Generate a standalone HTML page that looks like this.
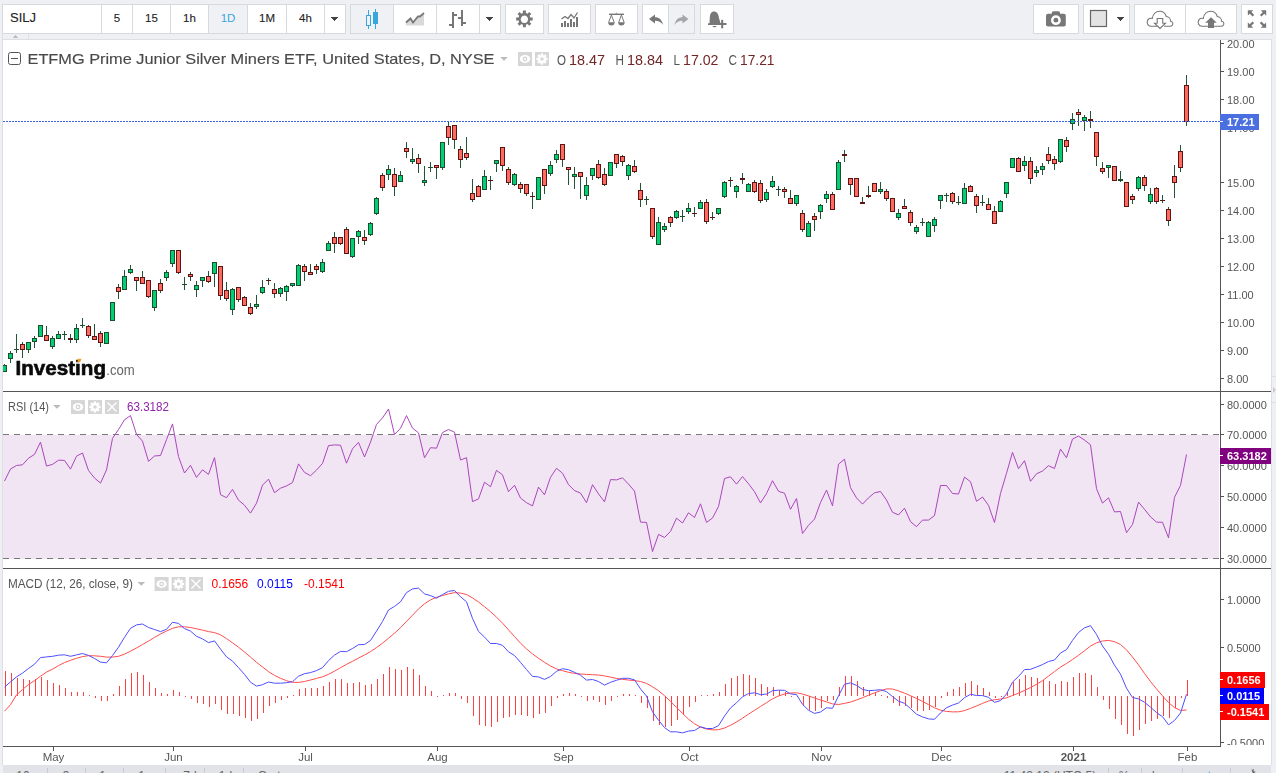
<!DOCTYPE html>
<html><head><meta charset="utf-8">
<style>
html,body{margin:0;padding:0}
body{width:1276px;height:773px;overflow:hidden;position:relative;background:#eef0f4;font-family:"Liberation Sans",sans-serif;color:#333}
.b{position:absolute;top:4px;height:28px;background:#fff;border:1px solid #d6d9de;box-sizing:content-box}
.d{position:absolute;top:5px;width:1px;height:28px;background:#d6d9de}
.t{position:absolute;top:4px;height:28px;line-height:28px;text-align:center;font-size:11.5px;color:#222;font-weight:normal;-webkit-text-stroke:0.1px #222}
.g{position:absolute;background:#f0f1f4}
#chart{position:absolute;left:2px;top:39px;width:1268px;height:725px;background:#fff;border:1px solid #dcdfe4;border-bottom:none}
svg{position:absolute;left:0;top:0}
</style></head><body>
<!-- toolbar group 1 -->
<div class="b" style="left:2px;width:342px"></div>
<div class="g" style="left:209px;top:5px;width:38px;height:28px"></div>
<div class="d" style="left:101px"></div>
<div class="d" style="left:132px"></div>
<div class="d" style="left:170px"></div>
<div class="d" style="left:208px"></div>
<div class="d" style="left:247px"></div>
<div class="d" style="left:286px"></div>
<div class="d" style="left:324px"></div>
<div class="t" style="left:10px;width:60px;text-align:left;font-weight:normal;font-size:13px">SILJ</div>
<div class="t" style="left:102px;width:30px">5</div>
<div class="t" style="left:133px;width:37px">15</div>
<div class="t" style="left:171px;width:37px">1h</div>
<div class="t" style="left:209px;width:38px;color:#37a6de;-webkit-text-stroke:0">1D</div>
<div class="t" style="left:248px;width:38px">1M</div>
<div class="t" style="left:287px;width:37px">4h</div>
<!-- group 2 -->
<div class="b" style="left:350px;width:149px"></div>
<div class="g" style="left:351px;top:5px;width:42px;height:28px"></div>
<div class="d" style="left:393px"></div>
<div class="d" style="left:436px"></div>
<div class="d" style="left:479px"></div>
<!-- group 3..7 -->
<div class="b" style="left:505px;width:37px"></div>
<div class="b" style="left:548px;width:41px"></div>
<div class="b" style="left:595px;width:41px"></div>
<div class="b" style="left:642px;width:51px"></div>
<div class="g" style="left:669px;top:5px;width:25px;height:28px"></div>
<div class="d" style="left:668px"></div>
<div class="b" style="left:700px;width:32px"></div>
<!-- right groups -->
<div class="b" style="left:1033px;width:44px"></div>
<div class="b" style="left:1083px;width:45px"></div>
<div class="b" style="left:1134px;width:101px"></div>
<div class="d" style="left:1185px"></div>
<div class="b" style="left:1241px;width:30px"></div>

<!-- chart frame -->
<div id="chart"></div>
<div style="position:absolute;left:28px;top:34px;width:1px;height:5px;background:#dcdfe4"></div>
<div style="position:absolute;left:2px;top:33px;width:1px;height:6px;background:#dcdfe4"></div>

<!-- bottom toolbar -->
<div style="position:absolute;left:3px;top:765px;width:1268px;height:8px;background:#e1e3e8;overflow:hidden">
 <svg width="1268" height="8" viewBox="3 765 1268 8" style="position:absolute;left:0;top:0">
  <g fill="#c9ccd2">
   <rect x="47" y="768" width="1" height="6"/><rect x="85" y="768" width="1" height="6"/><rect x="123" y="768" width="1" height="6"/>
   <rect x="165" y="768" width="1" height="6"/><rect x="204" y="768" width="1" height="6"/><rect x="243" y="768" width="1" height="6"/>
   <rect x="1108" y="768" width="1" height="6"/><rect x="1141" y="768" width="1" height="6"/><rect x="1182" y="768" width="1" height="6"/><rect x="1230" y="768" width="1" height="6"/>
  </g>
  <g font-family="Liberation Sans" font-size="12" fill="#666" text-anchor="middle">
   <text x="26" y="779.6">10y</text><text x="69" y="779.6">3y</text><text x="105.5" y="779.6">1y</text><text x="146.5" y="779.6">1m</text>
   <text x="190" y="779.6">7d</text><text x="225.5" y="779.6">1d</text><text x="277.5" y="779.6">Go to...</text>
   <text x="1050" y="779.6">11:42:12 (UTC-5)</text><text x="1124" y="779.6">%</text><text x="1160" y="779.6">log</text>
   <text x="1206" y="779.6" fill="#37a6de">auto</text>
  </g>
  <path d="M1251 768 l1 2 2 -1 -0.5 2.2 2.2 0.5 -1.5 1.5 1.5 1.5 -2.2 0.5z" fill="#666"/>
 </svg>
</div>
<!-- right strip -->
<div style="position:absolute;left:1272px;top:39px;width:4px;height:734px;background:#eef0f4"></div>
<div style="position:absolute;left:1272px;top:376px;width:4px;height:1px;background:#dcdfe4"></div>
<div style="position:absolute;left:1272px;top:402px;width:4px;height:1px;background:#dcdfe4"></div>
<svg width="4" height="8" style="position:absolute;left:1272px;top:386px"><path d="M1 1 L4 4 L1 7z" fill="#c9c9c9"/></svg>
<svg width="1276" height="773" viewBox="0 0 1276 773" shape-rendering="crispEdges" style="will-change:transform">
<defs><clipPath id="mainclip"><rect x="3" y="40" width="1217" height="351"/></clipPath><clipPath id="macdclip"><rect x="1221" y="569" width="50" height="176"/></clipPath></defs>
<!-- toolbar icons -->
<g fill="#444">
 <path d="M330 17 h8 l-4 4z"/>
 <path d="M485 17 h8 l-4 4z"/>
 <path d="M1116 17 h8 l-4 4z"/>
</g>
<!-- candle type icon (blue) -->
<g fill="#37a6de">
 <rect x="368" y="10" width="1" height="19"/>
 <rect x="366" y="15" width="5" height="11"/>
 <rect x="367" y="16" width="3" height="9" fill="#f0f1f4"/>
 <rect x="375" y="9" width="1" height="20"/>
 <rect x="373" y="12" width="5" height="12"/>
</g>
<!-- line chart icon -->
<path d="M406 25.5 L406 22.5 L410.5 18.5 L413 22.5 L418 16.5 L420 16.5 L424 13 L424 25.5 Z" fill="#d9d9d9" shape-rendering="auto"/>
<polyline points="406,22.5 410.5,18.5 413,22.5 418,16.5 420,16.5 424,13" fill="none" stroke="#777" stroke-width="1.8" shape-rendering="auto"/>
<!-- bars icon -->
<g fill="#777">
 <rect x="452" y="12" width="2" height="16"/>
 <rect x="449" y="24" width="3" height="2"/>
 <rect x="454" y="14" width="3" height="2"/>
 <rect x="461" y="10" width="2" height="16"/>
 <rect x="458" y="17" width="3" height="2"/>
 <rect x="463" y="22" width="3" height="2"/>
</g>
<!-- gear -->
<g fill="#777" shape-rendering="auto">
 <path d="M522.9 10.6h3v2.4l1.6 0.7 1.7-1.7 2.1 2.1-1.7 1.7 0.7 1.6h2.4v3h-2.4l-0.7 1.6 1.7 1.7-2.1 2.1-1.7-1.7-1.6 0.7v2.4h-3v-2.4l-1.6-0.7-1.7 1.7-2.1-2.1 1.7-1.7-0.7-1.6h-2.4v-3h2.4l0.7-1.6-1.7-1.7 2.1-2.1 1.7 1.7 1.6-0.7z M524.4 15.6a3.7 3.7 0 1 0 0.01 0z" fill-rule="evenodd"/>
</g>
<!-- indicators -->
<g fill="#777">
 <rect x="561" y="23" width="2" height="4"/>
 <rect x="564" y="21" width="2" height="6"/>
 <rect x="567" y="23" width="2" height="4"/>
 <rect x="570" y="19" width="2" height="8"/>
 <rect x="573" y="22" width="2" height="5"/>
 <rect x="576" y="17" width="2" height="10"/>
</g>
<polyline points="561.5,19 565,16.5 568,18.5 571,14.5 574,18 577.5,12.5" fill="none" stroke="#777" stroke-width="1.3" shape-rendering="auto"/>
<!-- scales -->
<g fill="none" stroke="#777" stroke-width="1" shape-rendering="auto">
 <rect x="609" y="13.6" width="15" height="1.4" fill="#777" stroke="none"/>
 <path d="M615.5 13.6 L616.5 12.4 L617.5 13.6z" fill="#777" stroke="none"/>
 <path d="M611.4 15 L608.6 22.5 M611.4 15 L614.2 22.5 M621.4 15 L618.6 22.5 M621.4 15 L624.2 22.5"/>
 <path d="M608.2 22.3 a3.2 3.2 0 0 0 6.4 0z M618.2 22.3 a3.2 3.2 0 0 0 6.4 0z" fill="#777" stroke="none"/>
</g>
<!-- undo / redo -->
<g shape-rendering="auto">
 <path d="M649 19 L655 14.5 L655 17.2 C659 17.2 662 19.5 663 25 C661 22 658.5 20.8 655 20.8 L655 23.5 Z" fill="#777"/>
 <path d="M688.5 19 L682.5 14.5 L682.5 17.2 C678.5 17.2 675.5 19.5 674.5 25 C676.5 22 679 20.8 682.5 20.8 L682.5 23.5 Z" fill="#a6a6a6"/>
</g>
<!-- alert -->
<g fill="#777" shape-rendering="auto">
 <path d="M714 11.5 C711 11.5 710 14 709.8 18 L709.5 23.2 L708 23.2 L708 25 L718.5 25 L718.5 23.2 L720.5 23.2 L719 18 C718.5 14 717 11.5 714 11.5z"/>
 <path d="M712.5 26 h4 a2 1.2 0 0 1 -4 0z"/>
 <rect x="718" y="23" width="8.5" height="2"/>
 <rect x="721.2" y="19.8" width="2" height="8.5"/>
</g>
<!-- camera -->
<g fill="#777" shape-rendering="auto">
 <rect x="1046" y="13.8" width="19.8" height="12.8" rx="2"/>
 <rect x="1051.8" y="11.2" width="8.2" height="4" rx="1.5"/>
 <circle cx="1055.9" cy="20.2" r="4.9" fill="#fff"/>
 <circle cx="1055.9" cy="20.2" r="2.4" fill="#777"/>
</g>
<!-- color box -->
<rect x="1090.5" y="10.5" width="16" height="16" fill="#e3e3e3" stroke="#666" stroke-width="1.2" shape-rendering="auto"/>
<!-- clouds -->
<g fill="none" stroke="#777" stroke-width="1.1" shape-rendering="auto">
 <path d="M1157 26.3 H1151 C1147.5 26.3 1146.8 22.5 1147.4 21 C1148 18.8 1150 18 1152.3 18.4 C1153 14 1156 11.2 1159.5 11.2 C1163 11.2 1165.5 13.5 1166.3 16.5 C1168.8 16.8 1170.7 18.8 1170.5 21.2 C1172.8 21.5 1173.2 23.5 1172.5 25 C1172 26 1171 26.3 1170 26.3 H1164"/>
 <path d="M1157.2 18.5 H1162.7 V23.2 H1165.5 L1160 28.5 L1154.5 23.2 H1157.2 Z" fill="#fff"/>
 <path d="M1208 26.3 H1202 C1198.5 26.3 1197.8 22.5 1198.4 21 C1199 18.8 1201 18 1203.3 18.4 C1204 14 1207 11.2 1210.5 11.2 C1214 11.2 1216.5 13.5 1217.3 16.5 C1219.8 16.8 1221.7 18.8 1221.5 21.2 C1223.8 21.5 1224.2 23.5 1223.5 25 C1223 26 1222 26.3 1221 26.3 H1214"/>
 <path d="M1211 17.2 L1216.8 22.8 H1214 V28 H1208 V22.8 H1205.2 Z" fill="#777" stroke="none"/>
</g>
<!-- fullscreen -->
<g fill="#777" shape-rendering="auto">
 <path d="M1247.8 10.2 h5.5 l-1.9 1.9 2.8 2.8-1.6 1.6-2.8-2.8-1.9 1.9z"/>
 <path d="M1266.2 10.2 v5.5 l-1.9-1.9-2.8 2.8-1.6-1.6 2.8-2.8-1.9-1.9z"/>
 <path d="M1247.8 27.8 v-5.5 l1.9 1.9 2.8-2.8 1.6 1.6-2.8 2.8 1.9 1.9z"/>
 <path d="M1266.2 27.8 h-5.5 l1.9-1.9-2.8-2.8 1.6-1.6 2.8 2.8 1.9-1.9z"/>
</g>
<!-- sub strip triangle -->
<path d="M12.8 38 L15.5 34.8 L18.2 38z" fill="#bbb" shape-rendering="auto"/>

<!-- RSI band -->
<rect x="3" y="434.5" width="1216" height="124.1" fill="#f1e5f3"/>
<line x1="3" y1="434.5" x2="1220" y2="434.5" stroke="#777" stroke-dasharray="6,5" shape-rendering="crispEdges"/>
<line x1="3" y1="558.5" x2="1220" y2="558.5" stroke="#777" stroke-dasharray="6,5" shape-rendering="crispEdges"/>

<!-- axes -->
<rect x="1220" y="40" width="1" height="707" fill="#555"/>
<rect x="3" y="391" width="1268" height="1" fill="#555"/>
<rect x="3" y="568" width="1268" height="1" fill="#555"/>
<rect x="3" y="746" width="1218" height="1" fill="#555"/>

<!-- candles -->
<g clip-path="url(#mainclip)">
<rect x="4" y="364" width="1" height="8" fill="#225535"/>
<rect x="2" y="365" width="5" height="7" fill="#1d4d2c"/>
<rect x="3" y="366" width="3" height="5" fill="#00d073"/>
<rect x="10" y="351" width="1" height="12" fill="#225535"/>
<rect x="8" y="353" width="5" height="6" fill="#1d4d2c"/>
<rect x="9" y="354" width="3" height="4" fill="#00d073"/>
<rect x="16" y="334" width="1" height="19" fill="#225535"/>
<rect x="14" y="349" width="5" height="1" fill="#1d4d2c"/>
<rect x="22" y="342" width="1" height="16" fill="#225535"/>
<rect x="20" y="344" width="5" height="6" fill="#5c1414"/>
<rect x="21" y="345" width="3" height="4" fill="#ff6a5f"/>
<rect x="28" y="342" width="1" height="11" fill="#225535"/>
<rect x="26" y="342" width="5" height="8" fill="#1d4d2c"/>
<rect x="27" y="343" width="3" height="6" fill="#00d073"/>
<rect x="34" y="336" width="1" height="12" fill="#225535"/>
<rect x="32" y="338" width="5" height="4" fill="#1d4d2c"/>
<rect x="33" y="339" width="3" height="2" fill="#00d073"/>
<rect x="40" y="325" width="1" height="12" fill="#225535"/>
<rect x="38" y="325" width="5" height="12" fill="#1d4d2c"/>
<rect x="39" y="326" width="3" height="10" fill="#00d073"/>
<rect x="46" y="326" width="1" height="15" fill="#225535"/>
<rect x="44" y="335" width="5" height="6" fill="#5c1414"/>
<rect x="45" y="336" width="3" height="4" fill="#ff6a5f"/>
<rect x="52" y="336" width="1" height="13" fill="#225535"/>
<rect x="50" y="338" width="5" height="9" fill="#1d4d2c"/>
<rect x="51" y="339" width="3" height="7" fill="#00d073"/>
<rect x="58" y="331" width="1" height="8" fill="#225535"/>
<rect x="56" y="334" width="5" height="5" fill="#1d4d2c"/>
<rect x="57" y="335" width="3" height="3" fill="#00d073"/>
<rect x="64" y="331" width="1" height="9" fill="#225535"/>
<rect x="62" y="334" width="5" height="1" fill="#1d4d2c"/>
<rect x="70" y="334" width="1" height="9" fill="#225535"/>
<rect x="68" y="338" width="5" height="2" fill="#5c1414"/>
<rect x="76" y="324" width="1" height="19" fill="#225535"/>
<rect x="74" y="328" width="5" height="12" fill="#1d4d2c"/>
<rect x="75" y="329" width="3" height="10" fill="#00d073"/>
<rect x="82" y="318" width="1" height="10" fill="#225535"/>
<rect x="80" y="325" width="5" height="1" fill="#1d4d2c"/>
<rect x="88" y="325" width="1" height="13" fill="#225535"/>
<rect x="86" y="326" width="5" height="10" fill="#5c1414"/>
<rect x="87" y="327" width="3" height="8" fill="#ff6a5f"/>
<rect x="94" y="324" width="1" height="16" fill="#225535"/>
<rect x="92" y="336" width="5" height="4" fill="#5c1414"/>
<rect x="93" y="337" width="3" height="2" fill="#ff6a5f"/>
<rect x="100" y="331" width="1" height="16" fill="#225535"/>
<rect x="98" y="333" width="5" height="10" fill="#5c1414"/>
<rect x="99" y="334" width="3" height="8" fill="#ff6a5f"/>
<rect x="106" y="332" width="1" height="12" fill="#225535"/>
<rect x="104" y="332" width="5" height="12" fill="#1d4d2c"/>
<rect x="105" y="333" width="3" height="10" fill="#00d073"/>
<rect x="112" y="302" width="1" height="19" fill="#225535"/>
<rect x="110" y="302" width="5" height="19" fill="#1d4d2c"/>
<rect x="111" y="303" width="3" height="17" fill="#00d073"/>
<rect x="118" y="284" width="1" height="15" fill="#225535"/>
<rect x="116" y="287" width="5" height="5" fill="#5c1414"/>
<rect x="117" y="288" width="3" height="3" fill="#ff6a5f"/>
<rect x="124" y="270" width="1" height="20" fill="#225535"/>
<rect x="122" y="276" width="5" height="14" fill="#1d4d2c"/>
<rect x="123" y="277" width="3" height="12" fill="#00d073"/>
<rect x="130" y="265" width="1" height="9" fill="#225535"/>
<rect x="128" y="269" width="5" height="4" fill="#1d4d2c"/>
<rect x="129" y="270" width="3" height="2" fill="#00d073"/>
<rect x="136" y="277" width="1" height="14" fill="#225535"/>
<rect x="134" y="277" width="5" height="4" fill="#5c1414"/>
<rect x="135" y="278" width="3" height="2" fill="#ff6a5f"/>
<rect x="142" y="271" width="1" height="13" fill="#225535"/>
<rect x="140" y="277" width="5" height="7" fill="#5c1414"/>
<rect x="141" y="278" width="3" height="5" fill="#ff6a5f"/>
<rect x="148" y="280" width="1" height="18" fill="#225535"/>
<rect x="146" y="280" width="5" height="17" fill="#5c1414"/>
<rect x="147" y="281" width="3" height="15" fill="#ff6a5f"/>
<rect x="154" y="290" width="1" height="21" fill="#225535"/>
<rect x="152" y="290" width="5" height="18" fill="#1d4d2c"/>
<rect x="153" y="291" width="3" height="16" fill="#00d073"/>
<rect x="160" y="279" width="1" height="14" fill="#225535"/>
<rect x="158" y="283" width="5" height="8" fill="#5c1414"/>
<rect x="159" y="284" width="3" height="6" fill="#ff6a5f"/>
<rect x="166" y="270" width="1" height="11" fill="#225535"/>
<rect x="164" y="272" width="5" height="6" fill="#1d4d2c"/>
<rect x="165" y="273" width="3" height="4" fill="#00d073"/>
<rect x="172" y="250" width="1" height="17" fill="#225535"/>
<rect x="170" y="250" width="5" height="14" fill="#1d4d2c"/>
<rect x="171" y="251" width="3" height="12" fill="#00d073"/>
<rect x="178" y="250" width="1" height="24" fill="#225535"/>
<rect x="176" y="250" width="5" height="23" fill="#5c1414"/>
<rect x="177" y="251" width="3" height="21" fill="#ff6a5f"/>
<rect x="184" y="277" width="1" height="13" fill="#225535"/>
<rect x="182" y="284" width="5" height="1" fill="#1d4d2c"/>
<rect x="190" y="272" width="1" height="9" fill="#225535"/>
<rect x="188" y="274" width="5" height="3" fill="#5c1414"/>
<rect x="189" y="275" width="3" height="1" fill="#ff6a5f"/>
<rect x="196" y="281" width="1" height="16" fill="#225535"/>
<rect x="194" y="285" width="5" height="5" fill="#1d4d2c"/>
<rect x="195" y="286" width="3" height="3" fill="#00d073"/>
<rect x="202" y="277" width="1" height="10" fill="#225535"/>
<rect x="200" y="277" width="5" height="4" fill="#1d4d2c"/>
<rect x="201" y="278" width="3" height="2" fill="#00d073"/>
<rect x="208" y="271" width="1" height="12" fill="#225535"/>
<rect x="206" y="276" width="5" height="6" fill="#5c1414"/>
<rect x="207" y="277" width="3" height="4" fill="#ff6a5f"/>
<rect x="214" y="262" width="1" height="25" fill="#225535"/>
<rect x="212" y="262" width="5" height="12" fill="#1d4d2c"/>
<rect x="213" y="263" width="3" height="10" fill="#00d073"/>
<rect x="220" y="266" width="1" height="34" fill="#225535"/>
<rect x="218" y="266" width="5" height="30" fill="#5c1414"/>
<rect x="219" y="267" width="3" height="28" fill="#ff6a5f"/>
<rect x="226" y="282" width="1" height="19" fill="#225535"/>
<rect x="224" y="290" width="5" height="9" fill="#5c1414"/>
<rect x="225" y="291" width="3" height="7" fill="#ff6a5f"/>
<rect x="232" y="288" width="1" height="27" fill="#225535"/>
<rect x="230" y="289" width="5" height="21" fill="#1d4d2c"/>
<rect x="231" y="290" width="3" height="19" fill="#00d073"/>
<rect x="238" y="287" width="1" height="15" fill="#225535"/>
<rect x="236" y="287" width="5" height="13" fill="#5c1414"/>
<rect x="237" y="288" width="3" height="11" fill="#ff6a5f"/>
<rect x="244" y="296" width="1" height="10" fill="#225535"/>
<rect x="242" y="297" width="5" height="9" fill="#5c1414"/>
<rect x="243" y="298" width="3" height="7" fill="#ff6a5f"/>
<rect x="250" y="303" width="1" height="12" fill="#225535"/>
<rect x="248" y="307" width="5" height="7" fill="#5c1414"/>
<rect x="249" y="308" width="3" height="5" fill="#ff6a5f"/>
<rect x="256" y="295" width="1" height="14" fill="#225535"/>
<rect x="254" y="304" width="5" height="3" fill="#1d4d2c"/>
<rect x="255" y="305" width="3" height="1" fill="#00d073"/>
<rect x="262" y="280" width="1" height="14" fill="#225535"/>
<rect x="260" y="287" width="5" height="6" fill="#1d4d2c"/>
<rect x="261" y="288" width="3" height="4" fill="#00d073"/>
<rect x="268" y="278" width="1" height="7" fill="#225535"/>
<rect x="266" y="280" width="5" height="1" fill="#5c1414"/>
<rect x="274" y="283" width="1" height="15" fill="#225535"/>
<rect x="272" y="289" width="5" height="5" fill="#5c1414"/>
<rect x="273" y="290" width="3" height="3" fill="#ff6a5f"/>
<rect x="280" y="287" width="1" height="10" fill="#225535"/>
<rect x="278" y="288" width="5" height="6" fill="#1d4d2c"/>
<rect x="279" y="289" width="3" height="4" fill="#00d073"/>
<rect x="286" y="285" width="1" height="16" fill="#225535"/>
<rect x="284" y="286" width="5" height="6" fill="#1d4d2c"/>
<rect x="285" y="287" width="3" height="4" fill="#00d073"/>
<rect x="292" y="283" width="1" height="4" fill="#225535"/>
<rect x="290" y="283" width="5" height="3" fill="#1d4d2c"/>
<rect x="291" y="284" width="3" height="1" fill="#00d073"/>
<rect x="298" y="264" width="1" height="22" fill="#225535"/>
<rect x="296" y="265" width="5" height="21" fill="#1d4d2c"/>
<rect x="297" y="266" width="3" height="19" fill="#00d073"/>
<rect x="304" y="264" width="1" height="17" fill="#225535"/>
<rect x="302" y="266" width="5" height="6" fill="#5c1414"/>
<rect x="303" y="267" width="3" height="4" fill="#ff6a5f"/>
<rect x="310" y="264" width="1" height="11" fill="#225535"/>
<rect x="308" y="272" width="5" height="3" fill="#5c1414"/>
<rect x="309" y="273" width="3" height="1" fill="#ff6a5f"/>
<rect x="316" y="264" width="1" height="10" fill="#225535"/>
<rect x="314" y="266" width="5" height="4" fill="#5c1414"/>
<rect x="315" y="267" width="3" height="2" fill="#ff6a5f"/>
<rect x="322" y="259" width="1" height="14" fill="#225535"/>
<rect x="320" y="262" width="5" height="10" fill="#1d4d2c"/>
<rect x="321" y="263" width="3" height="8" fill="#00d073"/>
<rect x="328" y="241" width="1" height="10" fill="#225535"/>
<rect x="326" y="243" width="5" height="8" fill="#1d4d2c"/>
<rect x="327" y="244" width="3" height="6" fill="#00d073"/>
<rect x="334" y="232" width="1" height="21" fill="#225535"/>
<rect x="332" y="237" width="5" height="7" fill="#5c1414"/>
<rect x="333" y="238" width="3" height="5" fill="#ff6a5f"/>
<rect x="340" y="237" width="1" height="8" fill="#225535"/>
<rect x="338" y="237" width="5" height="7" fill="#5c1414"/>
<rect x="339" y="238" width="3" height="5" fill="#ff6a5f"/>
<rect x="346" y="227" width="1" height="27" fill="#225535"/>
<rect x="344" y="229" width="5" height="25" fill="#5c1414"/>
<rect x="345" y="230" width="3" height="23" fill="#ff6a5f"/>
<rect x="352" y="238" width="1" height="20" fill="#225535"/>
<rect x="350" y="238" width="5" height="19" fill="#1d4d2c"/>
<rect x="351" y="239" width="3" height="17" fill="#00d073"/>
<rect x="358" y="230" width="1" height="14" fill="#225535"/>
<rect x="356" y="231" width="5" height="6" fill="#1d4d2c"/>
<rect x="357" y="232" width="3" height="4" fill="#00d073"/>
<rect x="364" y="230" width="1" height="15" fill="#225535"/>
<rect x="362" y="237" width="5" height="4" fill="#5c1414"/>
<rect x="363" y="238" width="3" height="2" fill="#ff6a5f"/>
<rect x="370" y="222" width="1" height="14" fill="#225535"/>
<rect x="368" y="223" width="5" height="12" fill="#1d4d2c"/>
<rect x="369" y="224" width="3" height="10" fill="#00d073"/>
<rect x="376" y="197" width="1" height="18" fill="#225535"/>
<rect x="374" y="198" width="5" height="16" fill="#1d4d2c"/>
<rect x="375" y="199" width="3" height="14" fill="#00d073"/>
<rect x="382" y="173" width="1" height="18" fill="#225535"/>
<rect x="380" y="175" width="5" height="13" fill="#5c1414"/>
<rect x="381" y="176" width="3" height="11" fill="#ff6a5f"/>
<rect x="388" y="165" width="1" height="15" fill="#225535"/>
<rect x="386" y="169" width="5" height="6" fill="#1d4d2c"/>
<rect x="387" y="170" width="3" height="4" fill="#00d073"/>
<rect x="394" y="168" width="1" height="28" fill="#225535"/>
<rect x="392" y="174" width="5" height="13" fill="#5c1414"/>
<rect x="393" y="175" width="3" height="11" fill="#ff6a5f"/>
<rect x="400" y="171" width="1" height="11" fill="#225535"/>
<rect x="398" y="175" width="5" height="7" fill="#1d4d2c"/>
<rect x="399" y="176" width="3" height="5" fill="#00d073"/>
<rect x="406" y="142" width="1" height="16" fill="#225535"/>
<rect x="404" y="148" width="5" height="4" fill="#5c1414"/>
<rect x="405" y="149" width="3" height="2" fill="#ff6a5f"/>
<rect x="412" y="148" width="1" height="16" fill="#225535"/>
<rect x="410" y="159" width="5" height="3" fill="#1d4d2c"/>
<rect x="411" y="160" width="3" height="1" fill="#00d073"/>
<rect x="418" y="154" width="1" height="19" fill="#225535"/>
<rect x="416" y="158" width="5" height="6" fill="#5c1414"/>
<rect x="417" y="159" width="3" height="4" fill="#ff6a5f"/>
<rect x="424" y="166" width="1" height="20" fill="#225535"/>
<rect x="422" y="180" width="5" height="3" fill="#1d4d2c"/>
<rect x="423" y="181" width="3" height="1" fill="#00d073"/>
<rect x="430" y="162" width="1" height="10" fill="#225535"/>
<rect x="428" y="167" width="5" height="1" fill="#1d4d2c"/>
<rect x="436" y="165" width="1" height="14" fill="#225535"/>
<rect x="434" y="165" width="5" height="3" fill="#5c1414"/>
<rect x="435" y="166" width="3" height="1" fill="#ff6a5f"/>
<rect x="442" y="142" width="1" height="28" fill="#225535"/>
<rect x="440" y="142" width="5" height="26" fill="#1d4d2c"/>
<rect x="441" y="143" width="3" height="24" fill="#00d073"/>
<rect x="448" y="122" width="1" height="23" fill="#225535"/>
<rect x="446" y="126" width="5" height="12" fill="#5c1414"/>
<rect x="447" y="127" width="3" height="10" fill="#ff6a5f"/>
<rect x="454" y="125" width="1" height="24" fill="#225535"/>
<rect x="452" y="125" width="5" height="15" fill="#5c1414"/>
<rect x="453" y="126" width="3" height="13" fill="#ff6a5f"/>
<rect x="460" y="146" width="1" height="22" fill="#225535"/>
<rect x="458" y="149" width="5" height="11" fill="#5c1414"/>
<rect x="459" y="150" width="3" height="9" fill="#ff6a5f"/>
<rect x="466" y="137" width="1" height="23" fill="#225535"/>
<rect x="464" y="153" width="5" height="5" fill="#5c1414"/>
<rect x="465" y="154" width="3" height="3" fill="#ff6a5f"/>
<rect x="472" y="179" width="1" height="23" fill="#225535"/>
<rect x="470" y="193" width="5" height="7" fill="#5c1414"/>
<rect x="471" y="194" width="3" height="5" fill="#ff6a5f"/>
<rect x="478" y="185" width="1" height="12" fill="#225535"/>
<rect x="476" y="186" width="5" height="11" fill="#5c1414"/>
<rect x="477" y="187" width="3" height="9" fill="#ff6a5f"/>
<rect x="484" y="170" width="1" height="20" fill="#225535"/>
<rect x="482" y="176" width="5" height="14" fill="#1d4d2c"/>
<rect x="483" y="177" width="3" height="12" fill="#00d073"/>
<rect x="490" y="176" width="1" height="14" fill="#225535"/>
<rect x="488" y="180" width="5" height="1" fill="#5c1414"/>
<rect x="496" y="160" width="1" height="12" fill="#225535"/>
<rect x="494" y="160" width="5" height="4" fill="#1d4d2c"/>
<rect x="495" y="161" width="3" height="2" fill="#00d073"/>
<rect x="502" y="147" width="1" height="24" fill="#225535"/>
<rect x="500" y="147" width="5" height="19" fill="#5c1414"/>
<rect x="501" y="148" width="3" height="17" fill="#ff6a5f"/>
<rect x="508" y="167" width="1" height="18" fill="#225535"/>
<rect x="506" y="169" width="5" height="14" fill="#5c1414"/>
<rect x="507" y="170" width="3" height="12" fill="#ff6a5f"/>
<rect x="514" y="173" width="1" height="13" fill="#225535"/>
<rect x="512" y="174" width="5" height="11" fill="#1d4d2c"/>
<rect x="513" y="175" width="3" height="9" fill="#00d073"/>
<rect x="520" y="182" width="1" height="11" fill="#225535"/>
<rect x="518" y="184" width="5" height="5" fill="#5c1414"/>
<rect x="519" y="185" width="3" height="3" fill="#ff6a5f"/>
<rect x="526" y="184" width="1" height="12" fill="#225535"/>
<rect x="524" y="184" width="5" height="10" fill="#5c1414"/>
<rect x="525" y="185" width="3" height="8" fill="#ff6a5f"/>
<rect x="532" y="192" width="1" height="17" fill="#225535"/>
<rect x="530" y="196" width="5" height="1" fill="#5c1414"/>
<rect x="538" y="177" width="1" height="23" fill="#225535"/>
<rect x="536" y="177" width="5" height="23" fill="#1d4d2c"/>
<rect x="537" y="178" width="3" height="21" fill="#00d073"/>
<rect x="544" y="169" width="1" height="25" fill="#225535"/>
<rect x="542" y="169" width="5" height="17" fill="#5c1414"/>
<rect x="543" y="170" width="3" height="15" fill="#ff6a5f"/>
<rect x="550" y="161" width="1" height="15" fill="#225535"/>
<rect x="548" y="165" width="5" height="9" fill="#1d4d2c"/>
<rect x="549" y="166" width="3" height="7" fill="#00d073"/>
<rect x="556" y="150" width="1" height="13" fill="#225535"/>
<rect x="554" y="154" width="5" height="6" fill="#1d4d2c"/>
<rect x="555" y="155" width="3" height="4" fill="#00d073"/>
<rect x="562" y="144" width="1" height="23" fill="#225535"/>
<rect x="560" y="144" width="5" height="16" fill="#5c1414"/>
<rect x="561" y="145" width="3" height="14" fill="#ff6a5f"/>
<rect x="568" y="167" width="1" height="18" fill="#225535"/>
<rect x="566" y="167" width="5" height="3" fill="#5c1414"/>
<rect x="567" y="168" width="3" height="1" fill="#ff6a5f"/>
<rect x="574" y="167" width="1" height="22" fill="#225535"/>
<rect x="572" y="174" width="5" height="3" fill="#1d4d2c"/>
<rect x="573" y="175" width="3" height="1" fill="#00d073"/>
<rect x="580" y="172" width="1" height="27" fill="#225535"/>
<rect x="578" y="172" width="5" height="5" fill="#5c1414"/>
<rect x="579" y="173" width="3" height="3" fill="#ff6a5f"/>
<rect x="586" y="177" width="1" height="23" fill="#225535"/>
<rect x="584" y="185" width="5" height="11" fill="#1d4d2c"/>
<rect x="585" y="186" width="3" height="9" fill="#00d073"/>
<rect x="592" y="168" width="1" height="12" fill="#225535"/>
<rect x="590" y="168" width="5" height="8" fill="#1d4d2c"/>
<rect x="591" y="169" width="3" height="6" fill="#00d073"/>
<rect x="598" y="160" width="1" height="19" fill="#225535"/>
<rect x="596" y="164" width="5" height="14" fill="#5c1414"/>
<rect x="597" y="165" width="3" height="12" fill="#ff6a5f"/>
<rect x="604" y="168" width="1" height="18" fill="#225535"/>
<rect x="602" y="174" width="5" height="11" fill="#5c1414"/>
<rect x="603" y="175" width="3" height="9" fill="#ff6a5f"/>
<rect x="610" y="162" width="1" height="14" fill="#225535"/>
<rect x="608" y="162" width="5" height="14" fill="#1d4d2c"/>
<rect x="609" y="163" width="3" height="12" fill="#00d073"/>
<rect x="616" y="154" width="1" height="14" fill="#225535"/>
<rect x="614" y="154" width="5" height="10" fill="#5c1414"/>
<rect x="615" y="155" width="3" height="8" fill="#ff6a5f"/>
<rect x="622" y="155" width="1" height="11" fill="#225535"/>
<rect x="620" y="156" width="5" height="6" fill="#5c1414"/>
<rect x="621" y="157" width="3" height="4" fill="#ff6a5f"/>
<rect x="628" y="164" width="1" height="16" fill="#225535"/>
<rect x="626" y="165" width="5" height="11" fill="#1d4d2c"/>
<rect x="627" y="166" width="3" height="9" fill="#00d073"/>
<rect x="634" y="160" width="1" height="13" fill="#225535"/>
<rect x="632" y="166" width="5" height="6" fill="#5c1414"/>
<rect x="633" y="167" width="3" height="4" fill="#ff6a5f"/>
<rect x="640" y="183" width="1" height="24" fill="#225535"/>
<rect x="638" y="190" width="5" height="10" fill="#5c1414"/>
<rect x="639" y="191" width="3" height="8" fill="#ff6a5f"/>
<rect x="646" y="196" width="1" height="9" fill="#225535"/>
<rect x="644" y="199" width="5" height="1" fill="#1d4d2c"/>
<rect x="652" y="208" width="1" height="31" fill="#225535"/>
<rect x="650" y="208" width="5" height="29" fill="#5c1414"/>
<rect x="651" y="209" width="3" height="27" fill="#ff6a5f"/>
<rect x="658" y="217" width="1" height="28" fill="#225535"/>
<rect x="656" y="222" width="5" height="23" fill="#1d4d2c"/>
<rect x="657" y="223" width="3" height="21" fill="#00d073"/>
<rect x="664" y="223" width="1" height="9" fill="#225535"/>
<rect x="662" y="226" width="5" height="4" fill="#1d4d2c"/>
<rect x="663" y="227" width="3" height="2" fill="#00d073"/>
<rect x="670" y="216" width="1" height="11" fill="#225535"/>
<rect x="668" y="217" width="5" height="6" fill="#5c1414"/>
<rect x="669" y="218" width="3" height="4" fill="#ff6a5f"/>
<rect x="676" y="210" width="1" height="9" fill="#225535"/>
<rect x="674" y="211" width="5" height="7" fill="#1d4d2c"/>
<rect x="675" y="212" width="3" height="5" fill="#00d073"/>
<rect x="682" y="210" width="1" height="12" fill="#225535"/>
<rect x="680" y="216" width="5" height="1" fill="#1d4d2c"/>
<rect x="688" y="203" width="1" height="11" fill="#225535"/>
<rect x="686" y="208" width="5" height="4" fill="#1d4d2c"/>
<rect x="687" y="209" width="3" height="2" fill="#00d073"/>
<rect x="694" y="207" width="1" height="10" fill="#225535"/>
<rect x="692" y="213" width="5" height="1" fill="#5c1414"/>
<rect x="700" y="200" width="1" height="9" fill="#225535"/>
<rect x="698" y="202" width="5" height="7" fill="#1d4d2c"/>
<rect x="699" y="203" width="3" height="5" fill="#00d073"/>
<rect x="706" y="199" width="1" height="25" fill="#225535"/>
<rect x="704" y="202" width="5" height="20" fill="#5c1414"/>
<rect x="705" y="203" width="3" height="18" fill="#ff6a5f"/>
<rect x="712" y="212" width="1" height="8" fill="#225535"/>
<rect x="710" y="217" width="5" height="1" fill="#5c1414"/>
<rect x="718" y="208" width="1" height="7" fill="#225535"/>
<rect x="716" y="208" width="5" height="6" fill="#1d4d2c"/>
<rect x="717" y="209" width="3" height="4" fill="#00d073"/>
<rect x="724" y="181" width="1" height="17" fill="#225535"/>
<rect x="722" y="182" width="5" height="15" fill="#1d4d2c"/>
<rect x="723" y="183" width="3" height="13" fill="#00d073"/>
<rect x="730" y="177" width="1" height="10" fill="#225535"/>
<rect x="728" y="180" width="5" height="1" fill="#5c1414"/>
<rect x="736" y="185" width="1" height="13" fill="#225535"/>
<rect x="734" y="186" width="5" height="6" fill="#1d4d2c"/>
<rect x="735" y="187" width="3" height="4" fill="#00d073"/>
<rect x="742" y="173" width="1" height="11" fill="#225535"/>
<rect x="740" y="178" width="5" height="2" fill="#5c1414"/>
<rect x="748" y="183" width="1" height="9" fill="#225535"/>
<rect x="746" y="184" width="5" height="8" fill="#1d4d2c"/>
<rect x="747" y="185" width="3" height="6" fill="#00d073"/>
<rect x="754" y="180" width="1" height="13" fill="#225535"/>
<rect x="752" y="182" width="5" height="10" fill="#5c1414"/>
<rect x="753" y="183" width="3" height="8" fill="#ff6a5f"/>
<rect x="760" y="180" width="1" height="23" fill="#225535"/>
<rect x="758" y="183" width="5" height="18" fill="#5c1414"/>
<rect x="759" y="184" width="3" height="16" fill="#ff6a5f"/>
<rect x="766" y="189" width="1" height="13" fill="#225535"/>
<rect x="764" y="192" width="5" height="8" fill="#1d4d2c"/>
<rect x="765" y="193" width="3" height="6" fill="#00d073"/>
<rect x="772" y="176" width="1" height="12" fill="#225535"/>
<rect x="770" y="181" width="5" height="6" fill="#1d4d2c"/>
<rect x="771" y="182" width="3" height="4" fill="#00d073"/>
<rect x="778" y="186" width="1" height="10" fill="#225535"/>
<rect x="776" y="189" width="5" height="1" fill="#1d4d2c"/>
<rect x="784" y="187" width="1" height="11" fill="#225535"/>
<rect x="782" y="189" width="5" height="3" fill="#5c1414"/>
<rect x="783" y="190" width="3" height="1" fill="#ff6a5f"/>
<rect x="790" y="190" width="1" height="14" fill="#225535"/>
<rect x="788" y="198" width="5" height="6" fill="#5c1414"/>
<rect x="789" y="199" width="3" height="4" fill="#ff6a5f"/>
<rect x="796" y="195" width="1" height="11" fill="#225535"/>
<rect x="794" y="195" width="5" height="9" fill="#1d4d2c"/>
<rect x="795" y="196" width="3" height="7" fill="#00d073"/>
<rect x="802" y="210" width="1" height="22" fill="#225535"/>
<rect x="800" y="213" width="5" height="17" fill="#5c1414"/>
<rect x="801" y="214" width="3" height="15" fill="#ff6a5f"/>
<rect x="808" y="221" width="1" height="16" fill="#225535"/>
<rect x="806" y="223" width="5" height="14" fill="#1d4d2c"/>
<rect x="807" y="224" width="3" height="12" fill="#00d073"/>
<rect x="814" y="213" width="1" height="18" fill="#225535"/>
<rect x="812" y="216" width="5" height="4" fill="#5c1414"/>
<rect x="813" y="217" width="3" height="2" fill="#ff6a5f"/>
<rect x="820" y="204" width="1" height="15" fill="#225535"/>
<rect x="818" y="205" width="5" height="7" fill="#1d4d2c"/>
<rect x="819" y="206" width="3" height="5" fill="#00d073"/>
<rect x="826" y="191" width="1" height="12" fill="#225535"/>
<rect x="824" y="194" width="5" height="5" fill="#1d4d2c"/>
<rect x="825" y="195" width="3" height="3" fill="#00d073"/>
<rect x="832" y="192" width="1" height="18" fill="#225535"/>
<rect x="830" y="194" width="5" height="16" fill="#5c1414"/>
<rect x="831" y="195" width="3" height="14" fill="#ff6a5f"/>
<rect x="838" y="160" width="1" height="30" fill="#225535"/>
<rect x="836" y="162" width="5" height="28" fill="#1d4d2c"/>
<rect x="837" y="163" width="3" height="26" fill="#00d073"/>
<rect x="844" y="150" width="1" height="12" fill="#225535"/>
<rect x="842" y="154" width="5" height="2" fill="#5c1414"/>
<rect x="850" y="178" width="1" height="17" fill="#225535"/>
<rect x="848" y="178" width="5" height="7" fill="#5c1414"/>
<rect x="849" y="179" width="3" height="5" fill="#ff6a5f"/>
<rect x="856" y="178" width="1" height="19" fill="#225535"/>
<rect x="854" y="178" width="5" height="19" fill="#5c1414"/>
<rect x="855" y="179" width="3" height="17" fill="#ff6a5f"/>
<rect x="862" y="197" width="1" height="7" fill="#225535"/>
<rect x="860" y="202" width="5" height="2" fill="#5c1414"/>
<rect x="868" y="186" width="1" height="12" fill="#225535"/>
<rect x="866" y="195" width="5" height="2" fill="#5c1414"/>
<rect x="874" y="183" width="1" height="9" fill="#225535"/>
<rect x="872" y="183" width="5" height="9" fill="#5c1414"/>
<rect x="873" y="184" width="3" height="7" fill="#ff6a5f"/>
<rect x="880" y="182" width="1" height="12" fill="#225535"/>
<rect x="878" y="189" width="5" height="3" fill="#1d4d2c"/>
<rect x="879" y="190" width="3" height="1" fill="#00d073"/>
<rect x="886" y="189" width="1" height="12" fill="#225535"/>
<rect x="884" y="191" width="5" height="8" fill="#5c1414"/>
<rect x="885" y="192" width="3" height="6" fill="#ff6a5f"/>
<rect x="892" y="198" width="1" height="14" fill="#225535"/>
<rect x="890" y="198" width="5" height="14" fill="#5c1414"/>
<rect x="891" y="199" width="3" height="12" fill="#ff6a5f"/>
<rect x="898" y="209" width="1" height="11" fill="#225535"/>
<rect x="896" y="213" width="5" height="5" fill="#1d4d2c"/>
<rect x="897" y="214" width="3" height="3" fill="#00d073"/>
<rect x="904" y="199" width="1" height="10" fill="#225535"/>
<rect x="902" y="206" width="5" height="3" fill="#5c1414"/>
<rect x="903" y="207" width="3" height="1" fill="#ff6a5f"/>
<rect x="910" y="210" width="1" height="16" fill="#225535"/>
<rect x="908" y="212" width="5" height="11" fill="#5c1414"/>
<rect x="909" y="213" width="3" height="9" fill="#ff6a5f"/>
<rect x="916" y="225" width="1" height="9" fill="#225535"/>
<rect x="914" y="227" width="5" height="5" fill="#1d4d2c"/>
<rect x="915" y="228" width="3" height="3" fill="#00d073"/>
<rect x="922" y="218" width="1" height="8" fill="#225535"/>
<rect x="920" y="222" width="5" height="1" fill="#1d4d2c"/>
<rect x="928" y="221" width="1" height="16" fill="#225535"/>
<rect x="926" y="222" width="5" height="15" fill="#1d4d2c"/>
<rect x="927" y="223" width="3" height="13" fill="#00d073"/>
<rect x="934" y="217" width="1" height="15" fill="#225535"/>
<rect x="932" y="219" width="5" height="7" fill="#1d4d2c"/>
<rect x="933" y="220" width="3" height="5" fill="#00d073"/>
<rect x="940" y="195" width="1" height="14" fill="#225535"/>
<rect x="938" y="195" width="5" height="6" fill="#1d4d2c"/>
<rect x="939" y="196" width="3" height="4" fill="#00d073"/>
<rect x="946" y="193" width="1" height="9" fill="#225535"/>
<rect x="944" y="195" width="5" height="1" fill="#1d4d2c"/>
<rect x="952" y="192" width="1" height="12" fill="#225535"/>
<rect x="950" y="193" width="5" height="9" fill="#5c1414"/>
<rect x="951" y="194" width="3" height="7" fill="#ff6a5f"/>
<rect x="958" y="196" width="1" height="9" fill="#225535"/>
<rect x="956" y="202" width="5" height="1" fill="#1d4d2c"/>
<rect x="964" y="183" width="1" height="21" fill="#225535"/>
<rect x="962" y="188" width="5" height="16" fill="#1d4d2c"/>
<rect x="963" y="189" width="3" height="14" fill="#00d073"/>
<rect x="970" y="185" width="1" height="7" fill="#225535"/>
<rect x="968" y="186" width="5" height="6" fill="#5c1414"/>
<rect x="969" y="187" width="3" height="4" fill="#ff6a5f"/>
<rect x="976" y="194" width="1" height="19" fill="#225535"/>
<rect x="974" y="196" width="5" height="10" fill="#5c1414"/>
<rect x="975" y="197" width="3" height="8" fill="#ff6a5f"/>
<rect x="982" y="195" width="1" height="11" fill="#225535"/>
<rect x="980" y="202" width="5" height="1" fill="#1d4d2c"/>
<rect x="988" y="198" width="1" height="12" fill="#225535"/>
<rect x="986" y="204" width="5" height="6" fill="#5c1414"/>
<rect x="987" y="205" width="3" height="4" fill="#ff6a5f"/>
<rect x="994" y="206" width="1" height="18" fill="#225535"/>
<rect x="992" y="211" width="5" height="13" fill="#5c1414"/>
<rect x="993" y="212" width="3" height="11" fill="#ff6a5f"/>
<rect x="1000" y="200" width="1" height="12" fill="#225535"/>
<rect x="998" y="201" width="5" height="11" fill="#1d4d2c"/>
<rect x="999" y="202" width="3" height="9" fill="#00d073"/>
<rect x="1006" y="182" width="1" height="16" fill="#225535"/>
<rect x="1004" y="182" width="5" height="12" fill="#1d4d2c"/>
<rect x="1005" y="183" width="3" height="10" fill="#00d073"/>
<rect x="1012" y="158" width="1" height="10" fill="#225535"/>
<rect x="1010" y="158" width="5" height="10" fill="#1d4d2c"/>
<rect x="1011" y="159" width="3" height="8" fill="#00d073"/>
<rect x="1018" y="157" width="1" height="15" fill="#225535"/>
<rect x="1016" y="158" width="5" height="14" fill="#5c1414"/>
<rect x="1017" y="159" width="3" height="12" fill="#ff6a5f"/>
<rect x="1024" y="156" width="1" height="15" fill="#225535"/>
<rect x="1022" y="161" width="5" height="5" fill="#1d4d2c"/>
<rect x="1023" y="162" width="3" height="3" fill="#00d073"/>
<rect x="1030" y="157" width="1" height="27" fill="#225535"/>
<rect x="1028" y="161" width="5" height="18" fill="#5c1414"/>
<rect x="1029" y="162" width="3" height="16" fill="#ff6a5f"/>
<rect x="1036" y="166" width="1" height="11" fill="#225535"/>
<rect x="1034" y="170" width="5" height="3" fill="#1d4d2c"/>
<rect x="1035" y="171" width="3" height="1" fill="#00d073"/>
<rect x="1042" y="163" width="1" height="12" fill="#225535"/>
<rect x="1040" y="166" width="5" height="4" fill="#1d4d2c"/>
<rect x="1041" y="167" width="3" height="2" fill="#00d073"/>
<rect x="1048" y="147" width="1" height="17" fill="#225535"/>
<rect x="1046" y="154" width="5" height="7" fill="#5c1414"/>
<rect x="1047" y="155" width="3" height="5" fill="#ff6a5f"/>
<rect x="1054" y="156" width="1" height="14" fill="#225535"/>
<rect x="1052" y="159" width="5" height="5" fill="#5c1414"/>
<rect x="1053" y="160" width="3" height="3" fill="#ff6a5f"/>
<rect x="1060" y="139" width="1" height="24" fill="#225535"/>
<rect x="1058" y="139" width="5" height="23" fill="#1d4d2c"/>
<rect x="1059" y="140" width="3" height="21" fill="#00d073"/>
<rect x="1066" y="137" width="1" height="15" fill="#225535"/>
<rect x="1064" y="140" width="5" height="7" fill="#5c1414"/>
<rect x="1065" y="141" width="3" height="5" fill="#ff6a5f"/>
<rect x="1072" y="113" width="1" height="17" fill="#225535"/>
<rect x="1070" y="119" width="5" height="5" fill="#1d4d2c"/>
<rect x="1071" y="120" width="3" height="3" fill="#00d073"/>
<rect x="1078" y="109" width="1" height="17" fill="#225535"/>
<rect x="1076" y="112" width="5" height="3" fill="#5c1414"/>
<rect x="1077" y="113" width="3" height="1" fill="#ff6a5f"/>
<rect x="1084" y="115" width="1" height="16" fill="#225535"/>
<rect x="1082" y="117" width="5" height="4" fill="#1d4d2c"/>
<rect x="1083" y="118" width="3" height="2" fill="#00d073"/>
<rect x="1090" y="111" width="1" height="17" fill="#225535"/>
<rect x="1088" y="119" width="5" height="2" fill="#5c1414"/>
<rect x="1096" y="132" width="1" height="34" fill="#225535"/>
<rect x="1094" y="132" width="5" height="25" fill="#5c1414"/>
<rect x="1095" y="133" width="3" height="23" fill="#ff6a5f"/>
<rect x="1102" y="162" width="1" height="12" fill="#225535"/>
<rect x="1100" y="168" width="5" height="4" fill="#5c1414"/>
<rect x="1101" y="169" width="3" height="2" fill="#ff6a5f"/>
<rect x="1108" y="165" width="1" height="13" fill="#225535"/>
<rect x="1106" y="165" width="5" height="3" fill="#1d4d2c"/>
<rect x="1107" y="166" width="3" height="1" fill="#00d073"/>
<rect x="1114" y="166" width="1" height="15" fill="#225535"/>
<rect x="1112" y="166" width="5" height="15" fill="#5c1414"/>
<rect x="1113" y="167" width="3" height="13" fill="#ff6a5f"/>
<rect x="1120" y="171" width="1" height="11" fill="#225535"/>
<rect x="1118" y="179" width="5" height="2" fill="#1d4d2c"/>
<rect x="1126" y="182" width="1" height="25" fill="#225535"/>
<rect x="1124" y="182" width="5" height="25" fill="#5c1414"/>
<rect x="1125" y="183" width="3" height="23" fill="#ff6a5f"/>
<rect x="1132" y="194" width="1" height="10" fill="#225535"/>
<rect x="1130" y="196" width="5" height="4" fill="#5c1414"/>
<rect x="1131" y="197" width="3" height="2" fill="#ff6a5f"/>
<rect x="1138" y="176" width="1" height="15" fill="#225535"/>
<rect x="1136" y="177" width="5" height="12" fill="#1d4d2c"/>
<rect x="1137" y="178" width="3" height="10" fill="#00d073"/>
<rect x="1144" y="175" width="1" height="16" fill="#225535"/>
<rect x="1142" y="177" width="5" height="9" fill="#5c1414"/>
<rect x="1143" y="178" width="3" height="7" fill="#ff6a5f"/>
<rect x="1150" y="188" width="1" height="16" fill="#225535"/>
<rect x="1148" y="194" width="5" height="8" fill="#1d4d2c"/>
<rect x="1149" y="195" width="3" height="6" fill="#00d073"/>
<rect x="1156" y="187" width="1" height="17" fill="#225535"/>
<rect x="1154" y="188" width="5" height="14" fill="#5c1414"/>
<rect x="1155" y="189" width="3" height="12" fill="#ff6a5f"/>
<rect x="1162" y="195" width="1" height="8" fill="#225535"/>
<rect x="1160" y="200" width="5" height="1" fill="#5c1414"/>
<rect x="1168" y="207" width="1" height="19" fill="#225535"/>
<rect x="1166" y="209" width="5" height="12" fill="#5c1414"/>
<rect x="1167" y="210" width="3" height="10" fill="#ff6a5f"/>
<rect x="1174" y="165" width="1" height="33" fill="#225535"/>
<rect x="1172" y="176" width="5" height="7" fill="#5c1414"/>
<rect x="1173" y="177" width="3" height="5" fill="#ff6a5f"/>
<rect x="1180" y="145" width="1" height="27" fill="#225535"/>
<rect x="1178" y="151" width="5" height="17" fill="#5c1414"/>
<rect x="1179" y="152" width="3" height="15" fill="#ff6a5f"/>
<rect x="1186" y="75" width="1" height="51" fill="#225535"/>
<rect x="1184" y="85" width="5" height="37" fill="#5c1414"/>
<rect x="1185" y="86" width="3" height="35" fill="#ff6a5f"/>
</g>
<!-- last price line -->
<line x1="3" y1="121.5" x2="1220" y2="121.5" stroke="#3d64e0" stroke-dasharray="2,1" shape-rendering="crispEdges"/>

<!-- RSI line -->
<polyline points="4.5,481.0 10.5,469.0 16.5,465.5 22.5,464.8 28.5,458.2 34.5,454.4 40.5,442.1 46.5,466.0 52.5,464.4 58.5,460.2 64.5,460.4 70.5,469.1 76.5,456.2 82.5,453.0 88.5,470.5 94.5,478.0 100.5,483.1 106.5,469.9 112.5,438.4 118.5,429.5 124.5,419.8 130.5,415.6 136.5,434.4 142.5,441.2 148.5,461.4 154.5,456.0 160.5,455.5 166.5,439.7 172.5,423.9 178.5,456.6 184.5,473.0 190.5,465.3 196.5,477.4 202.5,469.8 208.5,474.4 214.5,457.6 220.5,494.7 226.5,497.7 232.5,489.4 238.5,500.1 244.5,505.2 250.5,513.1 256.5,503.2 262.5,485.2 268.5,479.1 274.5,492.7 280.5,488.2 286.5,485.9 292.5,482.6 298.5,463.9 304.5,472.4 310.5,475.7 316.5,470.1 322.5,463.4 328.5,445.6 334.5,444.9 340.5,445.2 346.5,463.2 352.5,448.8 358.5,442.4 364.5,457.0 370.5,442.1 376.5,424.4 382.5,417.9 388.5,409.0 394.5,434.5 400.5,428.3 406.5,415.6 412.5,428.1 418.5,432.9 424.5,457.8 430.5,447.7 436.5,448.2 442.5,432.6 448.5,429.5 454.5,432.2 460.5,460.0 466.5,457.7 472.5,501.6 478.5,498.9 484.5,482.2 490.5,486.7 496.5,470.4 502.5,474.8 508.5,491.7 514.5,485.2 520.5,498.1 526.5,502.7 532.5,505.9 538.5,487.1 544.5,494.8 550.5,477.3 556.5,468.3 562.5,473.2 568.5,484.6 574.5,490.6 580.5,493.1 586.5,502.7 592.5,484.7 598.5,493.9 604.5,501.8 610.5,479.6 616.5,479.9 622.5,477.8 628.5,484.1 634.5,491.1 640.5,522.1 646.5,522.4 652.5,551.6 658.5,534.4 664.5,537.5 670.5,531.4 676.5,518.2 682.5,523.0 688.5,512.8 694.5,517.5 700.5,503.8 706.5,522.4 712.5,518.0 718.5,506.5 724.5,478.5 730.5,476.8 736.5,484.1 742.5,476.6 748.5,483.7 754.5,491.7 760.5,502.9 766.5,493.6 772.5,480.7 778.5,491.3 784.5,493.2 790.5,509.3 796.5,498.5 802.5,533.5 808.5,525.3 814.5,519.1 820.5,502.5 826.5,490.1 832.5,505.8 838.5,464.2 844.5,459.2 850.5,487.7 856.5,497.9 862.5,504.1 868.5,497.8 874.5,492.8 880.5,491.5 886.5,500.0 892.5,512.3 898.5,514.9 904.5,508.2 910.5,521.6 916.5,526.7 922.5,520.1 928.5,520.1 934.5,515.6 940.5,485.5 946.5,485.5 952.5,493.5 958.5,494.0 964.5,477.1 970.5,481.7 976.5,501.3 982.5,497.0 988.5,505.4 994.5,522.5 1000.5,493.4 1006.5,473.3 1012.5,452.3 1018.5,468.7 1024.5,460.7 1030.5,481.3 1036.5,473.8 1042.5,471.0 1048.5,465.7 1054.5,468.5 1060.5,449.1 1066.5,457.8 1072.5,439.1 1078.5,436.1 1084.5,440.1 1090.5,444.8 1096.5,488.7 1102.5,503.1 1108.5,497.8 1114.5,511.9 1120.5,511.5 1126.5,532.7 1132.5,524.5 1138.5,502.1 1144.5,509.3 1150.5,516.8 1156.5,522.1 1162.5,522.3 1168.5,537.8 1174.5,497.3 1180.5,485.4 1186.5,454.5" fill="none" stroke="#ab47bc" stroke-width="1" shape-rendering="auto"/>

<!-- MACD -->
<g fill="#ff4040">
<rect x="5" y="671.4" width="1" height="24.1"/>
<rect x="11" y="672.7" width="1" height="22.8"/>
<rect x="17" y="677.5" width="1" height="18.0"/>
<rect x="23" y="679.1" width="1" height="16.4"/>
<rect x="29" y="679.5" width="1" height="16.0"/>
<rect x="35" y="679.0" width="1" height="16.5"/>
<rect x="41" y="676.9" width="1" height="18.6"/>
<rect x="47" y="680.3" width="1" height="15.2"/>
<rect x="53" y="682.6" width="1" height="12.9"/>
<rect x="59" y="685.1" width="1" height="10.4"/>
<rect x="65" y="687.7" width="1" height="7.8"/>
<rect x="71" y="691.5" width="1" height="4.0"/>
<rect x="77" y="692.1" width="1" height="3.4"/>
<rect x="83" y="692.4" width="1" height="3.1"/>
<rect x="89" y="695.3" width="1" height="1.0"/>
<rect x="95" y="695.5" width="1" height="2.8"/>
<rect x="101" y="695.5" width="1" height="5.8"/>
<rect x="107" y="695.5" width="1" height="5.8"/>
<rect x="113" y="694.0" width="1" height="1.5"/>
<rect x="119" y="686.4" width="1" height="9.1"/>
<rect x="125" y="678.6" width="1" height="16.9"/>
<rect x="131" y="672.6" width="1" height="22.9"/>
<rect x="137" y="672.3" width="1" height="23.2"/>
<rect x="143" y="675.0" width="1" height="20.5"/>
<rect x="149" y="681.9" width="1" height="13.6"/>
<rect x="155" y="687.5" width="1" height="8.0"/>
<rect x="161" y="693.2" width="1" height="2.3"/>
<rect x="167" y="693.8" width="1" height="1.7"/>
<rect x="173" y="689.5" width="1" height="6.0"/>
<rect x="179" y="692.2" width="1" height="3.3"/>
<rect x="185" y="695.5" width="1" height="1.8"/>
<rect x="191" y="695.5" width="1" height="3.6"/>
<rect x="197" y="695.5" width="1" height="7.5"/>
<rect x="203" y="695.5" width="1" height="8.8"/>
<rect x="209" y="695.5" width="1" height="11.0"/>
<rect x="215" y="695.5" width="1" height="8.3"/>
<rect x="221" y="695.5" width="1" height="14.3"/>
<rect x="227" y="695.5" width="1" height="18.2"/>
<rect x="233" y="695.5" width="1" height="18.3"/>
<rect x="239" y="695.5" width="1" height="20.5"/>
<rect x="245" y="695.5" width="1" height="22.5"/>
<rect x="251" y="695.5" width="1" height="25.1"/>
<rect x="257" y="695.5" width="1" height="23.8"/>
<rect x="263" y="695.5" width="1" height="17.7"/>
<rect x="269" y="695.5" width="1" height="10.4"/>
<rect x="275" y="695.5" width="1" height="7.9"/>
<rect x="281" y="695.5" width="1" height="4.9"/>
<rect x="287" y="695.5" width="1" height="2.0"/>
<rect x="293" y="694.9" width="1" height="1.0"/>
<rect x="299" y="689.2" width="1" height="6.3"/>
<rect x="305" y="687.7" width="1" height="7.8"/>
<rect x="311" y="688.1" width="1" height="7.4"/>
<rect x="317" y="687.7" width="1" height="7.8"/>
<rect x="323" y="686.3" width="1" height="9.2"/>
<rect x="329" y="681.7" width="1" height="13.8"/>
<rect x="335" y="679.4" width="1" height="16.1"/>
<rect x="341" y="679.2" width="1" height="16.3"/>
<rect x="347" y="682.8" width="1" height="12.7"/>
<rect x="353" y="682.7" width="1" height="12.8"/>
<rect x="359" y="682.1" width="1" height="13.4"/>
<rect x="365" y="685.0" width="1" height="10.5"/>
<rect x="371" y="684.3" width="1" height="11.2"/>
<rect x="377" y="679.1" width="1" height="16.4"/>
<rect x="383" y="673.8" width="1" height="21.7"/>
<rect x="389" y="667.3" width="1" height="28.2"/>
<rect x="395" y="668.7" width="1" height="26.8"/>
<rect x="401" y="669.6" width="1" height="25.9"/>
<rect x="407" y="666.6" width="1" height="28.9"/>
<rect x="413" y="669.1" width="1" height="26.4"/>
<rect x="419" y="674.7" width="1" height="20.8"/>
<rect x="425" y="685.6" width="1" height="9.9"/>
<rect x="431" y="691.2" width="1" height="4.3"/>
<rect x="437" y="695.5" width="1" height="1.0"/>
<rect x="443" y="694.5" width="1" height="1.0"/>
<rect x="449" y="692.9" width="1" height="2.6"/>
<rect x="455" y="693.4" width="1" height="2.1"/>
<rect x="461" y="695.5" width="1" height="3.6"/>
<rect x="467" y="695.5" width="1" height="7.3"/>
<rect x="473" y="695.5" width="1" height="20.5"/>
<rect x="479" y="695.5" width="1" height="29.4"/>
<rect x="485" y="695.5" width="1" height="30.4"/>
<rect x="491" y="695.5" width="1" height="31.8"/>
<rect x="497" y="695.5" width="1" height="26.4"/>
<rect x="503" y="695.5" width="1" height="22.1"/>
<rect x="509" y="695.5" width="1" height="21.9"/>
<rect x="515" y="695.5" width="1" height="19.0"/>
<rect x="521" y="695.5" width="1" height="19.2"/>
<rect x="527" y="695.5" width="1" height="20.7"/>
<rect x="533" y="695.5" width="1" height="22.5"/>
<rect x="539" y="695.5" width="1" height="18.5"/>
<rect x="545" y="695.5" width="1" height="17.1"/>
<rect x="551" y="695.5" width="1" height="10.5"/>
<rect x="557" y="695.5" width="1" height="2.4"/>
<rect x="563" y="693.5" width="1" height="2.0"/>
<rect x="569" y="692.9" width="1" height="2.6"/>
<rect x="575" y="694.4" width="1" height="1.1"/>
<rect x="581" y="695.5" width="1" height="1.2"/>
<rect x="587" y="695.5" width="1" height="5.6"/>
<rect x="593" y="695.5" width="1" height="4.8"/>
<rect x="599" y="695.5" width="1" height="6.5"/>
<rect x="605" y="695.5" width="1" height="9.2"/>
<rect x="611" y="695.5" width="1" height="5.1"/>
<rect x="617" y="695.5" width="1" height="1.8"/>
<rect x="623" y="694.4" width="1" height="1.1"/>
<rect x="629" y="693.7" width="1" height="1.8"/>
<rect x="635" y="694.8" width="1" height="1.0"/>
<rect x="641" y="695.5" width="1" height="7.3"/>
<rect x="647" y="695.5" width="1" height="12.7"/>
<rect x="653" y="695.5" width="1" height="25.0"/>
<rect x="659" y="695.5" width="1" height="29.5"/>
<rect x="665" y="695.5" width="1" height="31.9"/>
<rect x="671" y="695.5" width="1" height="30.4"/>
<rect x="677" y="695.5" width="1" height="24.5"/>
<rect x="683" y="695.5" width="1" height="19.4"/>
<rect x="689" y="695.5" width="1" height="11.9"/>
<rect x="695" y="695.5" width="1" height="6.8"/>
<rect x="701" y="695.1" width="1" height="1.0"/>
<rect x="707" y="695.0" width="1" height="1.0"/>
<rect x="713" y="694.1" width="1" height="1.4"/>
<rect x="719" y="691.5" width="1" height="4.0"/>
<rect x="725" y="683.6" width="1" height="11.9"/>
<rect x="731" y="678.0" width="1" height="17.5"/>
<rect x="737" y="676.3" width="1" height="19.2"/>
<rect x="743" y="674.2" width="1" height="21.3"/>
<rect x="749" y="675.0" width="1" height="20.5"/>
<rect x="755" y="678.0" width="1" height="17.5"/>
<rect x="761" y="683.6" width="1" height="11.9"/>
<rect x="767" y="686.9" width="1" height="8.6"/>
<rect x="773" y="687.4" width="1" height="8.1"/>
<rect x="779" y="689.8" width="1" height="5.7"/>
<rect x="785" y="691.8" width="1" height="3.7"/>
<rect x="791" y="695.5" width="1" height="1.0"/>
<rect x="797" y="695.5" width="1" height="1.8"/>
<rect x="803" y="695.5" width="1" height="10.4"/>
<rect x="809" y="695.5" width="1" height="14.3"/>
<rect x="815" y="695.5" width="1" height="15.4"/>
<rect x="821" y="695.5" width="1" height="12.1"/>
<rect x="827" y="695.5" width="1" height="5.9"/>
<rect x="833" y="695.5" width="1" height="4.4"/>
<rect x="839" y="686.9" width="1" height="8.6"/>
<rect x="845" y="676.3" width="1" height="19.2"/>
<rect x="851" y="676.3" width="1" height="19.2"/>
<rect x="857" y="680.8" width="1" height="14.7"/>
<rect x="863" y="687.2" width="1" height="8.3"/>
<rect x="869" y="691.0" width="1" height="4.5"/>
<rect x="875" y="693.1" width="1" height="2.4"/>
<rect x="881" y="694.5" width="1" height="1.0"/>
<rect x="887" y="695.5" width="1" height="2.7"/>
<rect x="893" y="695.5" width="1" height="7.6"/>
<rect x="899" y="695.5" width="1" height="10.4"/>
<rect x="905" y="695.5" width="1" height="10.2"/>
<rect x="911" y="695.5" width="1" height="12.9"/>
<rect x="917" y="695.5" width="1" height="15.7"/>
<rect x="923" y="695.5" width="1" height="15.6"/>
<rect x="929" y="695.5" width="1" height="14.3"/>
<rect x="935" y="695.5" width="1" height="11.4"/>
<rect x="941" y="695.5" width="1" height="2.7"/>
<rect x="947" y="691.7" width="1" height="3.8"/>
<rect x="953" y="688.7" width="1" height="6.8"/>
<rect x="959" y="686.7" width="1" height="8.8"/>
<rect x="965" y="682.6" width="1" height="12.9"/>
<rect x="971" y="681.4" width="1" height="14.1"/>
<rect x="977" y="685.0" width="1" height="10.5"/>
<rect x="983" y="687.6" width="1" height="7.9"/>
<rect x="989" y="691.8" width="1" height="3.7"/>
<rect x="995" y="695.5" width="1" height="2.6"/>
<rect x="1001" y="695.5" width="1" height="1.6"/>
<rect x="1007" y="691.7" width="1" height="3.8"/>
<rect x="1013" y="682.1" width="1" height="13.4"/>
<rect x="1019" y="678.8" width="1" height="16.7"/>
<rect x="1025" y="674.7" width="1" height="20.8"/>
<rect x="1031" y="677.3" width="1" height="18.2"/>
<rect x="1037" y="678.2" width="1" height="17.3"/>
<rect x="1043" y="679.5" width="1" height="16.0"/>
<rect x="1049" y="680.9" width="1" height="14.6"/>
<rect x="1055" y="683.9" width="1" height="11.6"/>
<rect x="1061" y="681.4" width="1" height="14.1"/>
<rect x="1067" y="681.7" width="1" height="13.8"/>
<rect x="1073" y="676.5" width="1" height="19.0"/>
<rect x="1079" y="672.7" width="1" height="22.8"/>
<rect x="1085" y="672.5" width="1" height="23.0"/>
<rect x="1091" y="675.0" width="1" height="20.5"/>
<rect x="1097" y="687.1" width="1" height="8.4"/>
<rect x="1103" y="695.5" width="1" height="4.9"/>
<rect x="1109" y="695.5" width="1" height="13.8"/>
<rect x="1115" y="695.5" width="1" height="23.5"/>
<rect x="1121" y="695.5" width="1" height="29.6"/>
<rect x="1127" y="695.5" width="1" height="38.4"/>
<rect x="1133" y="695.5" width="1" height="40.5"/>
<rect x="1139" y="695.5" width="1" height="34.0"/>
<rect x="1145" y="695.5" width="1" height="28.8"/>
<rect x="1151" y="695.5" width="1" height="25.7"/>
<rect x="1157" y="695.5" width="1" height="23.7"/>
<rect x="1163" y="695.5" width="1" height="20.9"/>
<rect x="1169" y="695.5" width="1" height="22.3"/>
<rect x="1175" y="695.5" width="1" height="12.9"/>
<rect x="1181" y="695.5" width="1" height="2.6"/>
<rect x="1187" y="679.7" width="1" height="15.8"/>
</g>
<polyline points="4.5,711.2 10.5,704.7 16.5,694.9 22.5,689.5 28.5,684.5 34.5,680.7 40.5,676.2 46.5,672.1 52.5,669.2 58.5,665.6 64.5,662.6 70.5,660.3 76.5,658.3 82.5,656.6 88.5,655.7 94.5,655.8 100.5,656.3 106.5,657.1 112.5,657.1 118.5,656.3 124.5,654.2 130.5,651.2 136.5,648.0 142.5,644.5 148.5,641.1 154.5,637.4 160.5,634.0 166.5,631.1 172.5,628.3 178.5,626.8 184.5,626.8 190.5,627.5 196.5,628.8 202.5,630.1 208.5,631.6 214.5,632.6 220.5,634.8 226.5,638.6 232.5,642.8 238.5,647.2 244.5,652.0 250.5,657.1 256.5,662.3 262.5,667.0 268.5,671.6 274.5,675.4 280.5,678.3 286.5,680.7 292.5,682.3 298.5,682.4 304.5,681.5 310.5,680.0 316.5,678.4 322.5,676.8 328.5,674.3 334.5,671.2 340.5,667.7 346.5,664.4 352.5,661.3 358.5,658.1 364.5,655.0 370.5,651.6 376.5,647.6 382.5,643.2 388.5,638.2 394.5,633.2 400.5,627.7 406.5,621.4 412.5,615.2 418.5,609.0 424.5,603.8 430.5,599.9 436.5,597.3 442.5,595.5 448.5,593.9 454.5,592.6 460.5,593.1 466.5,594.5 472.5,597.9 478.5,602.0 484.5,606.7 490.5,611.7 496.5,617.1 502.5,623.1 508.5,629.9 514.5,636.5 520.5,643.2 526.5,648.9 532.5,653.9 538.5,658.3 544.5,662.3 550.5,666.0 556.5,668.9 562.5,670.7 568.5,672.3 574.5,673.4 580.5,674.0 586.5,674.4 592.5,674.7 598.5,675.0 604.5,675.9 610.5,677.1 616.5,678.4 622.5,679.4 628.5,680.0 634.5,680.6 640.5,681.5 646.5,683.4 652.5,686.8 658.5,690.7 664.5,695.7 670.5,701.4 676.5,707.4 682.5,713.4 688.5,719.1 694.5,723.8 700.5,727.2 706.5,729.0 712.5,729.9 718.5,729.7 724.5,728.0 730.5,725.3 736.5,722.0 742.5,718.2 748.5,714.1 754.5,710.3 760.5,706.5 766.5,702.7 772.5,698.8 778.5,696.0 784.5,694.0 790.5,693.0 796.5,692.8 802.5,694.0 808.5,695.9 814.5,698.0 820.5,700.0 826.5,701.9 832.5,703.9 838.5,704.5 844.5,703.4 850.5,702.1 856.5,700.0 862.5,697.7 868.5,695.2 874.5,692.8 880.5,690.7 886.5,688.9 892.5,689.0 898.5,690.9 904.5,693.1 910.5,695.7 916.5,698.5 922.5,701.4 928.5,704.6 934.5,707.8 940.5,710.2 946.5,711.4 952.5,711.9 958.5,711.8 964.5,710.6 970.5,708.4 976.5,706.0 982.5,703.4 988.5,701.0 994.5,699.8 1000.5,699.0 1006.5,697.8 1012.5,695.5 1018.5,693.1 1024.5,690.4 1030.5,687.5 1036.5,684.3 1042.5,680.7 1048.5,676.1 1054.5,671.6 1060.5,667.1 1066.5,663.5 1072.5,659.5 1078.5,655.3 1084.5,650.7 1090.5,646.1 1096.5,642.8 1102.5,641.0 1108.5,640.4 1114.5,641.7 1120.5,644.5 1126.5,649.8 1132.5,657.0 1138.5,664.9 1144.5,673.4 1150.5,681.5 1156.5,688.9 1162.5,695.8 1168.5,702.5 1174.5,707.6 1180.5,710.4 1186.5,710.0" fill="none" stroke="#ff4d4d" stroke-width="1" shape-rendering="auto"/>
<polyline points="4.5,687.1 10.5,681.9 16.5,676.9 22.5,673.1 28.5,668.5 34.5,664.2 40.5,657.6 46.5,656.9 52.5,656.3 58.5,655.2 64.5,654.8 70.5,656.3 76.5,654.9 82.5,653.5 88.5,655.4 94.5,658.5 100.5,662.1 106.5,662.8 112.5,655.6 118.5,647.2 124.5,637.3 130.5,628.3 136.5,624.9 142.5,624.0 148.5,627.5 154.5,629.5 160.5,631.6 166.5,629.3 172.5,622.3 178.5,623.4 184.5,628.6 190.5,631.1 196.5,636.3 202.5,638.9 208.5,642.6 214.5,640.9 220.5,649.1 226.5,656.9 232.5,661.1 238.5,667.6 244.5,674.4 250.5,682.2 256.5,686.1 262.5,684.7 268.5,682.0 274.5,683.2 280.5,683.2 286.5,682.7 292.5,681.7 298.5,676.2 304.5,673.7 310.5,672.6 316.5,670.6 322.5,667.7 328.5,660.6 334.5,655.1 340.5,651.4 346.5,651.7 352.5,648.5 358.5,644.7 364.5,644.5 370.5,640.5 376.5,631.1 382.5,621.5 388.5,610.0 394.5,606.4 400.5,601.8 406.5,592.6 412.5,588.9 418.5,588.1 424.5,593.9 430.5,595.6 436.5,598.2 442.5,594.5 448.5,591.3 454.5,590.5 460.5,596.7 466.5,601.8 472.5,618.4 478.5,631.4 484.5,637.1 490.5,643.5 496.5,643.5 502.5,645.3 508.5,651.8 514.5,655.5 520.5,662.4 526.5,669.6 532.5,676.4 538.5,676.9 544.5,679.4 550.5,676.5 556.5,671.3 562.5,668.7 568.5,669.7 574.5,672.3 580.5,675.2 586.5,680.1 592.5,679.5 598.5,681.5 604.5,685.1 610.5,682.3 616.5,680.3 622.5,678.3 628.5,678.3 634.5,679.8 640.5,688.9 646.5,696.1 652.5,711.8 658.5,720.2 664.5,727.6 670.5,731.8 676.5,731.8 682.5,732.9 688.5,731.1 694.5,730.5 700.5,726.8 706.5,728.5 712.5,728.5 718.5,725.7 724.5,716.1 730.5,707.9 736.5,702.8 742.5,696.8 748.5,693.6 754.5,692.8 760.5,694.6 766.5,694.1 772.5,690.7 778.5,690.2 784.5,690.3 790.5,693.9 796.5,694.6 802.5,704.3 808.5,710.2 814.5,713.4 820.5,712.0 826.5,707.8 832.5,708.3 838.5,695.9 844.5,684.2 850.5,682.9 856.5,685.4 862.5,689.4 868.5,690.7 874.5,690.3 880.5,689.7 886.5,691.6 892.5,696.6 898.5,701.2 904.5,703.3 910.5,708.6 916.5,714.2 922.5,716.9 928.5,718.9 934.5,719.3 940.5,712.9 946.5,707.7 952.5,705.1 958.5,703.0 964.5,697.7 970.5,694.3 976.5,695.5 982.5,695.6 988.5,697.3 994.5,702.4 1000.5,700.6 1006.5,694.0 1012.5,682.1 1018.5,676.5 1024.5,669.6 1030.5,669.3 1036.5,667.0 1042.5,664.6 1048.5,661.5 1054.5,660.0 1060.5,653.0 1066.5,649.6 1072.5,640.4 1078.5,632.5 1084.5,627.8 1090.5,625.7 1096.5,634.4 1102.5,646.0 1108.5,654.2 1114.5,665.2 1120.5,674.1 1126.5,688.2 1132.5,697.5 1138.5,698.9 1144.5,702.3 1150.5,707.2 1156.5,712.6 1162.5,716.7 1168.5,724.8 1174.5,720.5 1180.5,713.0 1186.5,694.2" fill="none" stroke="#4d4dff" stroke-width="1" shape-rendering="auto"/>

<!-- axis labels -->
<g font-family="Liberation Sans" font-size="11" fill="#555" shape-rendering="crispEdges">
<rect x="1220" y="43" width="4" height="1" fill="#555"/><text x="1227" y="48">20.00</text>
<rect x="1220" y="71" width="4" height="1" fill="#555"/><text x="1227" y="76">19.00</text>
<rect x="1220" y="99" width="4" height="1" fill="#555"/><text x="1227" y="104">18.00</text>
<rect x="1220" y="127" width="4" height="1" fill="#555"/><text x="1227" y="132">17.00</text>
<rect x="1220" y="182" width="4" height="1" fill="#555"/><text x="1227" y="187">15.00</text>
<rect x="1220" y="210" width="4" height="1" fill="#555"/><text x="1227" y="215">14.00</text>
<rect x="1220" y="238" width="4" height="1" fill="#555"/><text x="1227" y="243">13.00</text>
<rect x="1220" y="266" width="4" height="1" fill="#555"/><text x="1227" y="271">12.00</text>
<rect x="1220" y="294" width="4" height="1" fill="#555"/><text x="1227" y="299">11.00</text>
<rect x="1220" y="322" width="4" height="1" fill="#555"/><text x="1227" y="327">10.00</text>
<rect x="1220" y="350" width="4" height="1" fill="#555"/><text x="1227" y="355">9.00</text>
<rect x="1220" y="378" width="4" height="1" fill="#555"/><text x="1227" y="383">8.00</text>
<rect x="1220" y="404" width="4" height="1" fill="#555"/><text x="1227" y="409">80.0000</text>
<rect x="1220" y="434" width="4" height="1" fill="#555"/><text x="1227" y="439">70.0000</text>
<rect x="1220" y="465" width="4" height="1" fill="#555"/><text x="1227" y="470">60.0000</text>
<rect x="1220" y="496" width="4" height="1" fill="#555"/><text x="1227" y="501">50.0000</text>
<rect x="1220" y="527" width="4" height="1" fill="#555"/><text x="1227" y="532">40.0000</text>
<rect x="1220" y="558" width="4" height="1" fill="#555"/><text x="1227" y="563">30.0000</text>
<g clip-path="url(#macdclip)"><rect x="1220" y="599" width="4" height="1" fill="#555"/><text x="1227" y="604">1.0000</text>
<rect x="1220" y="647" width="4" height="1" fill="#555"/><text x="1227" y="652">0.5000</text>
<rect x="1220" y="742" width="4" height="1" fill="#555"/><text x="1227" y="747">-0.5000</text></g>
</g>
<g font-family="Liberation Sans" font-size="11.5" fill="#555">
<rect x="53" y="746" width="1" height="5" fill="#555"/>
<text x="53.5" y="760.8" text-anchor="middle" font-weight="normal">May</text>
<rect x="173" y="746" width="1" height="5" fill="#555"/>
<text x="173.5" y="760.8" text-anchor="middle" font-weight="normal">Jun</text>
<rect x="305" y="746" width="1" height="5" fill="#555"/>
<text x="305.5" y="760.8" text-anchor="middle" font-weight="normal">Jul</text>
<rect x="437" y="746" width="1" height="5" fill="#555"/>
<text x="437.5" y="760.8" text-anchor="middle" font-weight="normal">Aug</text>
<rect x="563" y="746" width="1" height="5" fill="#555"/>
<text x="563.5" y="760.8" text-anchor="middle" font-weight="normal">Sep</text>
<rect x="689" y="746" width="1" height="5" fill="#555"/>
<text x="689.5" y="760.8" text-anchor="middle" font-weight="normal">Oct</text>
<rect x="821" y="746" width="1" height="5" fill="#555"/>
<text x="821.5" y="760.8" text-anchor="middle" font-weight="normal">Nov</text>
<rect x="941" y="746" width="1" height="5" fill="#555"/>
<text x="941.5" y="760.8" text-anchor="middle" font-weight="normal">Dec</text>
<rect x="1073" y="746" width="1" height="5" fill="#555"/>
<text x="1073.5" y="760.8" text-anchor="middle" font-weight="bold">2021</text>
<rect x="1187" y="746" width="1" height="5" fill="#555"/>
<text x="1187.5" y="760.8" text-anchor="middle" font-weight="normal">Feb</text>
</g>

<!-- value labels -->
<g font-family="Liberation Sans" font-size="11" font-weight="bold" fill="#fff">
 <rect x="1220" y="114" width="39" height="16" fill="#4a6fe0"/>
 <rect x="1220" y="121" width="3" height="1"/>
 <text x="1227" y="126">17.21</text>
 <rect x="1220" y="448" width="51" height="16" fill="#800080"/>
 <rect x="1220" y="455" width="3" height="1"/>
 <text x="1227" y="460">63.3182</text>
 <rect x="1220" y="672" width="45" height="16" fill="#ff0000"/>
 <rect x="1220" y="679" width="3" height="1"/>
 <text x="1227" y="684">0.1656</text>
 <rect x="1220" y="688" width="44" height="16" fill="#0000ff"/>
 <rect x="1220" y="695" width="3" height="1"/>
 <text x="1227" y="700">0.0115</text>
 <rect x="1220" y="704" width="49" height="16" fill="#ff0000"/>
 <rect x="1220" y="711" width="3" height="1"/>
 <text x="1227" y="716">-0.1541</text>
</g>

<!-- legends -->
<g font-family="Liberation Sans" font-size="15" fill="#4a4a4a">
 <rect x="8.5" y="52.5" width="12" height="12" rx="2" fill="none" stroke="#555" shape-rendering="auto"/>
 <rect x="11" y="58" width="7" height="1" fill="#555"/>
 <text x="27.5" y="64" textLength="467" lengthAdjust="spacingAndGlyphs" stroke="#4a4a4a" stroke-width="0.15">ETFMG Prime Junior Silver Miners ETF, United States, D, NYSE</text>
</g>
<g font-family="Liberation Sans" font-size="15">
 <text x="557" y="65" fill="#555" textLength="9" lengthAdjust="spacingAndGlyphs">O</text><text x="569" y="65" fill="#732626" textLength="36" lengthAdjust="spacingAndGlyphs">18.47</text>
 <text x="615.5" y="65" fill="#555" textLength="8.5" lengthAdjust="spacingAndGlyphs">H</text><text x="627" y="65" fill="#732626" textLength="36" lengthAdjust="spacingAndGlyphs">18.84</text>
 <text x="673.5" y="65" fill="#555" textLength="6.5" lengthAdjust="spacingAndGlyphs">L</text><text x="683" y="65" fill="#732626" textLength="35.5" lengthAdjust="spacingAndGlyphs">17.02</text>
 <text x="728.5" y="65" fill="#555" textLength="8.5" lengthAdjust="spacingAndGlyphs">C</text><text x="740" y="65" fill="#732626" textLength="34.5" lengthAdjust="spacingAndGlyphs">17.21</text>
</g>
<g font-family="Liberation Sans" font-size="12">
 <text x="8" y="411" fill="#555" textLength="41" lengthAdjust="spacingAndGlyphs">RSI (14)</text>
 <text x="127" y="411" fill="#8e24aa" textLength="42" lengthAdjust="spacingAndGlyphs">63.3182</text>
 <text x="8" y="588" fill="#555" textLength="125" lengthAdjust="spacingAndGlyphs">MACD (12, 26, close, 9)</text>
 <text x="211.5" y="588" fill="#ff0000">0.1656</text>
 <text x="257" y="588" fill="#0000ff">0.0115</text>
 <text x="304" y="588" fill="#ff0000">-0.1541</text>
</g>

<g shape-rendering="auto"><path d="M500.2 56.9 h7.6 l-3.8 3.8z" fill="#bbb"/><rect x="518" y="52" width="14" height="14" fill="#d6d6d6"/><ellipse cx="525" cy="59" rx="5.2" ry="3.9" fill="#fff"/><circle cx="525" cy="59" r="2.4" fill="#d6d6d6"/><circle cx="525" cy="59" r="1.1" fill="#fff"/><rect x="535" y="52" width="14" height="14" fill="#d6d6d6"/><circle cx="542" cy="59" r="3.9" fill="#fff"/><rect x="540.8" y="53.4" width="2.4" height="3" fill="#fff" transform="rotate(0 542 59)"/><rect x="540.8" y="53.4" width="2.4" height="3" fill="#fff" transform="rotate(45 542 59)"/><rect x="540.8" y="53.4" width="2.4" height="3" fill="#fff" transform="rotate(90 542 59)"/><rect x="540.8" y="53.4" width="2.4" height="3" fill="#fff" transform="rotate(135 542 59)"/><rect x="540.8" y="53.4" width="2.4" height="3" fill="#fff" transform="rotate(180 542 59)"/><rect x="540.8" y="53.4" width="2.4" height="3" fill="#fff" transform="rotate(225 542 59)"/><rect x="540.8" y="53.4" width="2.4" height="3" fill="#fff" transform="rotate(270 542 59)"/><rect x="540.8" y="53.4" width="2.4" height="3" fill="#fff" transform="rotate(315 542 59)"/><circle cx="542" cy="59" r="1.8" fill="#d6d6d6"/><path d="M53.1 405 h7.6 l-3.8 3.8z" fill="#bbb"/><rect x="71" y="400" width="14" height="14" fill="#d6d6d6"/><ellipse cx="78" cy="407" rx="5.2" ry="3.9" fill="#fff"/><circle cx="78" cy="407" r="2.4" fill="#d6d6d6"/><circle cx="78" cy="407" r="1.1" fill="#fff"/><rect x="88" y="400" width="14" height="14" fill="#d6d6d6"/><circle cx="95" cy="407" r="3.9" fill="#fff"/><rect x="93.8" y="401.4" width="2.4" height="3" fill="#fff" transform="rotate(0 95 407)"/><rect x="93.8" y="401.4" width="2.4" height="3" fill="#fff" transform="rotate(45 95 407)"/><rect x="93.8" y="401.4" width="2.4" height="3" fill="#fff" transform="rotate(90 95 407)"/><rect x="93.8" y="401.4" width="2.4" height="3" fill="#fff" transform="rotate(135 95 407)"/><rect x="93.8" y="401.4" width="2.4" height="3" fill="#fff" transform="rotate(180 95 407)"/><rect x="93.8" y="401.4" width="2.4" height="3" fill="#fff" transform="rotate(225 95 407)"/><rect x="93.8" y="401.4" width="2.4" height="3" fill="#fff" transform="rotate(270 95 407)"/><rect x="93.8" y="401.4" width="2.4" height="3" fill="#fff" transform="rotate(315 95 407)"/><circle cx="95" cy="407" r="1.8" fill="#d6d6d6"/><rect x="105" y="400" width="14" height="14" fill="#d6d6d6"/><path d="M107.5 402.5 L116.5 411.5 M116.5 402.5 L107.5 411.5" stroke="#fff" stroke-width="1.4"/><path d="M137.5 582 h7.6 l-3.8 3.8z" fill="#bbb"/><rect x="154.6" y="577" width="14" height="14" fill="#d6d6d6"/><ellipse cx="161.6" cy="584" rx="5.2" ry="3.9" fill="#fff"/><circle cx="161.6" cy="584" r="2.4" fill="#d6d6d6"/><circle cx="161.6" cy="584" r="1.1" fill="#fff"/><rect x="171.6" y="577" width="14" height="14" fill="#d6d6d6"/><circle cx="178.6" cy="584" r="3.9" fill="#fff"/><rect x="177.4" y="578.4" width="2.4" height="3" fill="#fff" transform="rotate(0 178.6 584)"/><rect x="177.4" y="578.4" width="2.4" height="3" fill="#fff" transform="rotate(45 178.6 584)"/><rect x="177.4" y="578.4" width="2.4" height="3" fill="#fff" transform="rotate(90 178.6 584)"/><rect x="177.4" y="578.4" width="2.4" height="3" fill="#fff" transform="rotate(135 178.6 584)"/><rect x="177.4" y="578.4" width="2.4" height="3" fill="#fff" transform="rotate(180 178.6 584)"/><rect x="177.4" y="578.4" width="2.4" height="3" fill="#fff" transform="rotate(225 178.6 584)"/><rect x="177.4" y="578.4" width="2.4" height="3" fill="#fff" transform="rotate(270 178.6 584)"/><rect x="177.4" y="578.4" width="2.4" height="3" fill="#fff" transform="rotate(315 178.6 584)"/><circle cx="178.6" cy="584" r="1.8" fill="#d6d6d6"/><rect x="189" y="577" width="14" height="14" fill="#d6d6d6"/><path d="M191.5 579.5 L200.5 588.5 M200.5 579.5 L191.5 588.5" stroke="#fff" stroke-width="1.4"/></g>
<!-- watermark -->
<g font-family="Liberation Sans">
 <text x="15.5" y="374.5" font-size="19.5" font-weight="bold" fill="#0a0a0a" textLength="90.5" lengthAdjust="spacingAndGlyphs" stroke="#0a0a0a" stroke-width="0.6">Investing</text>
 <text x="106.3" y="374.5" font-size="14" fill="#666" textLength="28.5" lengthAdjust="spacingAndGlyphs">.com</text>
 <path d="M77.2 362 L78.2 358.8 L81.4 358.8 L80.4 362 Z" fill="#f5a01a" shape-rendering="auto"/>
</g>
</svg>
</body></html>
